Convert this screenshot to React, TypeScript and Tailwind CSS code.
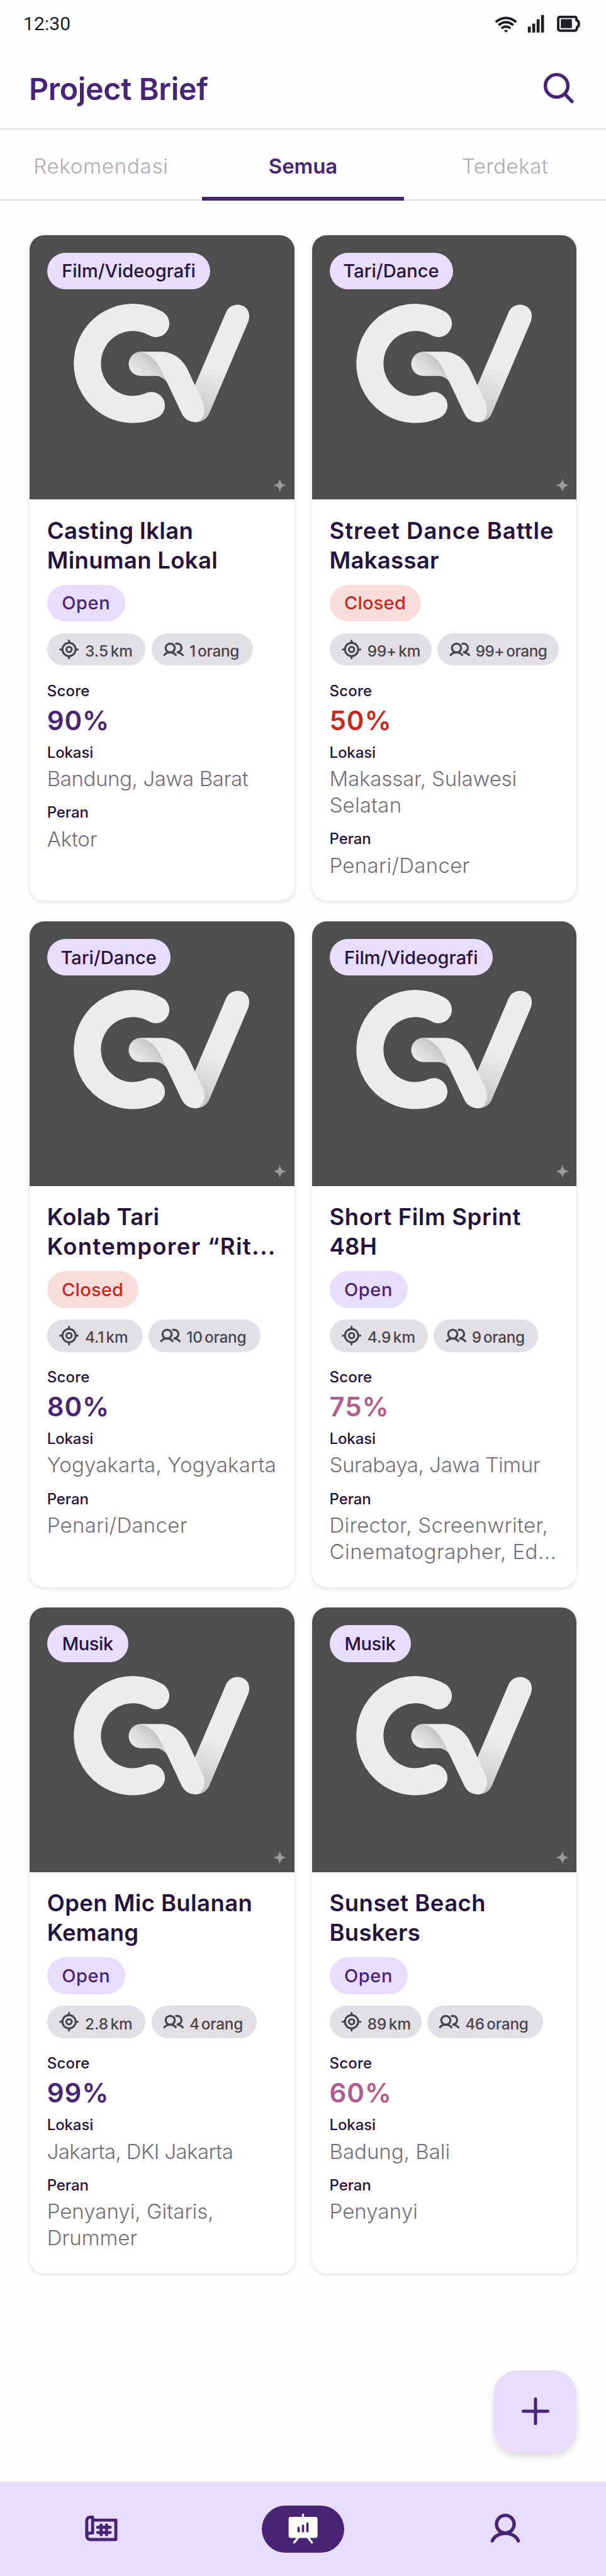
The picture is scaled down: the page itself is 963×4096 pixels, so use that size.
import type { ReactNode } from "react";

type Line = { text: string; tracking?: string };

type Brief = {
  category: string;
  categoryClass: string;
  title: Line[];
  open: boolean;
  distance: string;
  distanceClass: string;
  people: string;
  peopleClass: string;
  score: string;
  scoreClass: string;
  location: Line[];
  roles: Line[];
};

const FILM = "w-[259.5px]";
const TARI = "w-[196px] tracking-[0.1px]";
const MUSIK = "w-[129px] tracking-[-0.4px]";

const briefs: Brief[] = [
  {
    category: "Film/Videografi",
    categoryClass: FILM,
    title: [
      { text: "Casting Iklan", tracking: "tracking-[0.3px]" },
      { text: "Minuman Lokal", tracking: "tracking-[0.3px]" },
    ],
    open: true,
    distance: "3.5 km",
    distanceClass: "w-[156.6px] tracking-[0.1px]",
    people: "1 orang",
    peopleClass: "w-[161.3px] tracking-[-0.25px]",
    score: "90%",
    scoreClass: "text-[#482475]",
    location: [{ text: "Bandung, Jawa Barat", tracking: "tracking-[-0.38px]" }],
    roles: [{ text: "Aktor", tracking: "tracking-[-0.2px]" }],
  },
  {
    category: "Tari/Dance",
    categoryClass: TARI,
    title: [
      { text: "Street Dance Battle", tracking: "tracking-[1px]" },
      { text: "Makassar", tracking: "tracking-[0.3px]" },
    ],
    open: false,
    distance: "99+ km",
    distanceClass: "w-[163.6px] tracking-[-0.2px]",
    people: "99+ orang",
    peopleClass: "w-[194px] tracking-[-0.45px]",
    score: "50%",
    scoreClass: "text-[#c7281f]",
    location: [
      { text: "Makassar, Sulawesi", tracking: "tracking-[-0.15px]" },
      { text: "Selatan", tracking: "tracking-[0.2px]" },
    ],
    roles: [{ text: "Penari/Dancer", tracking: "tracking-[0.3px]" }],
  },
  {
    category: "Tari/Dance",
    categoryClass: TARI,
    title: [
      { text: "Kolab Tari", tracking: "tracking-[0.3px]" },
      { text: "Kontemporer “Rit...", tracking: "tracking-[1.3px]" },
    ],
    open: false,
    distance: "4.1 km",
    distanceClass: "w-[152px] tracking-[-0.1px]",
    people: "10 orang",
    peopleClass: "w-[177.6px] tracking-[-0.2px]",
    score: "80%",
    scoreClass: "text-[#482475]",
    location: [{ text: "Yogyakarta, Yogyakarta", tracking: "tracking-[0.15px]" }],
    roles: [{ text: "Penari/Dancer", tracking: "tracking-[0.3px]" }],
  },
  {
    category: "Film/Videografi",
    categoryClass: FILM,
    title: [
      { text: "Short Film Sprint", tracking: "tracking-[0.6px]" },
      { text: "48H", tracking: "tracking-[0.3px]" },
    ],
    open: true,
    distance: "4.9 km",
    distanceClass: "w-[156.6px] tracking-[0px]",
    people: "9 orang",
    peopleClass: "w-[166px] tracking-[-0.3px]",
    score: "75%",
    scoreClass: "text-[#b15c8e]",
    location: [{ text: "Surabaya, Jawa Timur", tracking: "tracking-[-0.4px]" }],
    roles: [
      { text: "Director, Screenwriter,", tracking: "tracking-[0.3px]" },
      { text: "Cinematographer, Ed...", tracking: "tracking-[0.47px]" },
    ],
  },
  {
    category: "Musik",
    categoryClass: MUSIK,
    title: [
      { text: "Open Mic Bulanan", tracking: "tracking-[0.4px]" },
      { text: "Kemang", tracking: "tracking-[0.1px]" },
    ],
    open: true,
    distance: "2.8 km",
    distanceClass: "w-[156.6px] tracking-[0px]",
    people: "4 orang",
    peopleClass: "w-[167px] tracking-[-0.25px]",
    score: "99%",
    scoreClass: "text-[#482475]",
    location: [{ text: "Jakarta, DKI Jakarta", tracking: "tracking-[-0.6px]" }],
    roles: [
      { text: "Penyanyi, Gitaris,", tracking: "tracking-[0px]" },
      { text: "Drummer", tracking: "tracking-[0px]" },
    ],
  },
  {
    category: "Musik",
    categoryClass: MUSIK,
    title: [
      { text: "Sunset Beach", tracking: "tracking-[0.5px]" },
      { text: "Buskers", tracking: "tracking-[0.3px]" },
    ],
    open: true,
    distance: "89 km",
    distanceClass: "w-[146px] tracking-[0px]",
    people: "46 orang",
    peopleClass: "w-[184px] tracking-[-0.2px]",
    score: "60%",
    scoreClass: "text-[#b15c8e]",
    location: [{ text: "Badung, Bali", tracking: "tracking-[0px]" }],
    roles: [{ text: "Penyanyi", tracking: "tracking-[0.1px]" }],
  },
];

function StatusIcons() {
  return (
    <svg className="h-[46.7px] w-[179.2px]" viewBox="0 0 690 180" fill="none">
      <g stroke="#1f1e24" strokeWidth="15">
        <path d="M64 73 Q127 23 190 73" />
        <path d="M82 93 Q127 56 172 93" />
        <path d="M100 112 Q127 90 154 112" />
      </g>
      <path d="M114 126 Q127 117 140 126 L127 138 Z" fill="#1f1e24" />
      <g fill="#1f1e24">
        <rect x="261" y="101" width="18" height="37" rx="2" />
        <rect x="288" y="83" width="18" height="55" rx="2" />
        <rect x="315" y="57" width="18" height="81" rx="2" />
        <rect x="342" y="30" width="18" height="108" rx="2" />
        <rect x="463" y="56" width="68" height="55" rx="3" />
      </g>
      <path
        d="M459 42 H547 Q559 42 559 53 V62 Q573 67 573 77 V92 Q573 101 563 104 L560 118 Q557 126 547 126 H459 Q447 126 447 114 V54 Q447 42 459 42 Z"
        stroke="#1f1e24"
        strokeWidth="15"
        strokeLinejoin="round"
      />
    </svg>
  );
}

function SearchIcon() {
  return (
    <svg className="h-[56px] w-[56px]" viewBox="0 0 72 72" fill="none" stroke="#482475" strokeWidth="7" strokeLinecap="round">
      <circle cx="31.5" cy="31.5" r="23" />
      <path d="M48 48 L63 63.5" />
    </svg>
  );
}

function LogoArt() {
  return (
    <svg className="block h-full w-full" viewBox="0 0 540 540" fill="none">
      <defs>
        <linearGradient id="fold" x1="600" y1="450" x2="500" y2="560" gradientUnits="userSpaceOnUse">
          <stop offset="0" stopColor="#bdbdbd" />
          <stop offset="0.45" stopColor="#d3d3d3" />
          <stop offset="1" stopColor="#e6e6e6" />
        </linearGradient>
        <linearGradient id="arm" x1="875" y1="810" x2="985" y2="520" gradientUnits="userSpaceOnUse">
          <stop offset="0" stopColor="#c4c4c4" />
          <stop offset="0.5" stopColor="#dcdcdc" />
          <stop offset="1" stopColor="#ececec" />
        </linearGradient>
      </defs>
      <g transform="translate(60 100) scale(0.33333)">
        <path d="M592 241 A279 282 0 1 0 565 743" stroke="#ececec" strokeWidth="166" strokeLinecap="round" />
        <path
          d="M835 845 C875 845 905 825 920 790 L1158 230 C1180 165 1140 126 1092 126 C1060 126 1035 145 1022 172 L833 615 L760 780 Z"
          fill="url(#arm)"
        />
        <path d="M500 414 A74 74 0 0 0 500 562 L590 562 C622 562 645 578 664 602 L690 560 L600 430 Z" fill="url(#fold)" />
        <path
          d="M492 414 L627 414 C693 414 750 455 783 515 L880 722 C887 737 890 752 890 770 C890 815 862 845 835 845 C800 845 767 826 750 790 L662 604 C640 556 620 510 597 480 C570 445 535 420 492 414 Z"
          fill="#ececec"
        />
      </g>
      <path
        d="M510.5 498 C512 506 515 509 523 510.5 C515 512 512 515 510.5 523 C509 515 506 512 498 510.5 C506 509 509 506 510.5 498 Z"
        fill="#9b9b9b"
        stroke="#9b9b9b"
      />
    </svg>
  );
}

function TargetIcon() {
  return (
    <svg className="h-[37.4px] w-[37.4px] shrink-0" viewBox="0 0 24 24" fill="none" stroke="#48464c" strokeWidth="2" strokeLinecap="round">
      <circle cx="12" cy="12" r="6.75" />
      <circle cx="12" cy="12" r="2.7" />
      <path d="M12 3 V5 M12 19 V21 M3 12 H5 M19 12 H21" />
    </svg>
  );
}

function PeopleIcon() {
  return (
    <svg className="h-[37.4px] w-[37.4px] shrink-0" viewBox="720 66 144 144" fill="none" stroke="#48464c" strokeWidth="12.5" strokeLinecap="round">
      <ellipse cx="772" cy="129" rx="28" ry="27" />
      <path d="M736 172 C752 151 791 151 806 172" />
      <path d="M808 103 C850 96 853 154 812 155 C830 157 841 163 849 173" />
    </svg>
  );
}

function Chip({ icon, label, className }: { icon: ReactNode; label: string; className: string }) {
  return (
    <div
      className={`flex h-[51.4px] items-center gap-[6.5px] whitespace-nowrap rounded-full bg-[#e2dfe6] pl-[16.4px] text-[24.3px] font-medium text-[#48464c] [word-spacing:-3px] ${className}`}
    >
      {icon}
      <span className="mt-[5px] leading-[30px]">{label}</span>
    </div>
  );
}

function Field({ label, lines }: { label: string; lines: Line[] }) {
  return (
    <div>
      <div className="text-[24px] font-medium leading-[28px] tracking-[-0.1px] text-[#25123f]">{label}</div>
      <div className="mt-[6.3px] text-[33px] font-light leading-[42px] text-[#736e79]">
        {lines.map((l) => (
          <div key={l.text} className={`whitespace-nowrap ${l.tracking ?? ""}`}>
            {l.text}
          </div>
        ))}
      </div>
    </div>
  );
}

function BriefCard({ b }: { b: Brief }) {
  return (
    <article className="h-[1058.5px] overflow-hidden rounded-[23.4px] bg-white shadow-[0_2px_7px_rgba(0,0,0,0.13)]">
      <div className="relative h-[420.6px] bg-[#4e4e4e]">
        <LogoArt />
        <div
          className={`absolute left-[28px] top-[28px] flex h-[58.4px] items-center justify-center whitespace-nowrap rounded-full bg-[#e8ddff] text-[29px] font-medium text-[#25123f] ${b.categoryClass}`}
        >
          {b.category}
        </div>
      </div>
      <div className="px-[28px] pt-[26.5px]">
        <h2 className="text-[36.5px] font-semibold leading-[46.7px] text-[#25123f]">
          {b.title.map((l) => (
            <div key={l.text} className={`whitespace-nowrap ${l.tracking ?? ""}`}>
              {l.text}
            </div>
          ))}
        </h2>
        <div
          className={
            b.open
              ? "mt-[15.6px] flex h-[58.4px] w-[124px] items-center justify-center rounded-full bg-[#e8ddff] text-[29px] font-medium tracking-[0.6px] text-[#482475]"
              : "mt-[15.6px] flex h-[58.4px] w-[145px] items-center justify-center rounded-full bg-[#fadedc] text-[29px] font-medium tracking-[0.25px] text-[#c7281f]"
          }
        >
          {b.open ? "Open" : "Closed"}
        </div>
        <div className="mt-[18.7px] flex gap-[9.35px]">
          <Chip icon={<TargetIcon />} label={b.distance} className={b.distanceClass} />
          <Chip icon={<PeopleIcon />} label={b.people} className={b.peopleClass} />
        </div>
        <div className="mt-[26.5px] text-[24px] font-medium leading-[28px] tracking-[0.2px] text-[#25123f]">Score</div>
        <div className={`mt-[9.7px] text-[42px] font-semibold leading-[46.7px] tracking-[0.9px] ${b.scoreClass}`}>{b.score}</div>
        <div className="mt-[13.6px] flex flex-col gap-[19.1px]">
          <Field label="Lokasi" lines={b.location} />
          <Field label="Peran" lines={b.roles} />
        </div>
      </div>
    </article>
  );
}

function NavMapIcon() {
  return (
    <svg
      className="h-[62.3px] w-[77.9px]"
      viewBox="-11 5 300 240"
      fill="none"
      stroke="#482475"
      strokeWidth="19"
      strokeLinecap="round"
      strokeLinejoin="round"
    >
      <path d="M86 71 H228 V190 H72 C59 190 50 181 50 168 V78 C50 62 58 53 70 53 H86 V150 H72 C60 150 51 157 51 168" />
      <path d="M138 101 V161 M171 101 V161 M117 115 H193 M117 147 H193" />
    </svg>
  );
}

function NavBoardIcon() {
  return (
    <svg className="h-full w-full" viewBox="42 45 504 288" fill="none" strokeLinecap="round">
      <rect x="206" y="114" width="177" height="129" rx="13" fill="#fff" />
      <path d="M294 101 V120 M262 245 L240 271 M327 245 L349 271" stroke="#fff" strokeWidth="13" />
      <path d="M267 182 V203 M294 168 V203 M321 155 V203" stroke="#482475" strokeWidth="14" />
    </svg>
  );
}

function NavUserIcon() {
  return (
    <svg className="h-[56px] w-[56px]" viewBox="994 5127 72 72" fill="none" stroke="#482475" strokeWidth="7" strokeLinecap="round">
      <circle cx="1030" cy="5153.5" r="18" />
      <path d="M1003.5 5187.5 C1012 5167 1048 5167 1056.5 5187.5" />
    </svg>
  );
}

export default function App() {
  return (
    <div className="relative flex h-[4096px] w-[963px] flex-col overflow-hidden bg-[#fefefe] font-['Inter',sans-serif]">
      <header className="flex h-[206.4px] shrink-0 flex-col border-b-[2.4px] border-[#e2dfe6]">
        <div className="flex h-[78px] items-start justify-between pl-[37px] pr-[12.5px]">
          <span className="mt-[19.5px] font-['Roboto',sans-serif] text-[30px] leading-[36px] tracking-[0.1px] text-[#1f1e24]">12:30</span>
          <div className="mt-[15.6px]">
            <StatusIcons />
          </div>
        </div>
        <div className="flex flex-1 items-start justify-between pl-[46px] pr-[47px]">
          <h1 className="mt-[35px] text-[48.4px] font-semibold leading-[58px] tracking-[-0.35px] text-[#482475]">Project Brief</h1>
          <div className="mt-[34.4px]">
            <SearchIcon />
          </div>
        </div>
      </header>
      <nav className="flex h-[113px] shrink-0">
        <div className="flex flex-1 justify-center border-b-[2.4px] border-[#e2dfe6] pt-[38px] text-[33px] font-light leading-[40px] tracking-[0.8px] text-[#aea9b4]">
          Rekomendasi
        </div>
        <div className="flex flex-1 justify-center border-b-[6.2px] border-[#482475] pt-[38px] text-[33px] font-semibold leading-[40px] tracking-[-0.1px] text-[#482475]">
          Semua
        </div>
        <div className="flex flex-1 justify-center border-b-[2.4px] border-[#e2dfe6] pt-[38px] text-[33px] font-light leading-[40px] tracking-[0.5px] text-[#aea9b4]">
          Terdekat
        </div>
      </nav>
      <main className="grid flex-1 grid-cols-2 content-start gap-x-[28px] gap-y-[32.7px] px-[46.7px] pt-[54.5px]">
        {briefs.map((b) => (
          <BriefCard key={b.title[0].text} b={b} />
        ))}
      </main>
      <button className="absolute bottom-[196.2px] right-[46.7px] flex h-[131px] w-[131px] items-center justify-center rounded-[37.4px] bg-[#e8ddff] shadow-[0_6px_12px_rgba(0,0,0,0.14)]">
        <svg className="h-[56px] w-[56px]" viewBox="0 0 72 72" fill="none" stroke="#482475" strokeWidth="6.5" strokeLinecap="round">
          <path d="M36 11 V61 M11 36 H61" />
        </svg>
      </button>
      <footer className="flex h-[149.6px] shrink-0 items-center bg-[#e8ddff]">
        <div className="flex flex-1 justify-center">
          <NavMapIcon />
        </div>
        <div className="flex flex-1 justify-center">
          <div className="h-[74.8px] w-[131px] rounded-full bg-[#482475]">
            <NavBoardIcon />
          </div>
        </div>
        <div className="flex flex-1 justify-center">
          <NavUserIcon />
        </div>
      </footer>
    </div>
  );
}
